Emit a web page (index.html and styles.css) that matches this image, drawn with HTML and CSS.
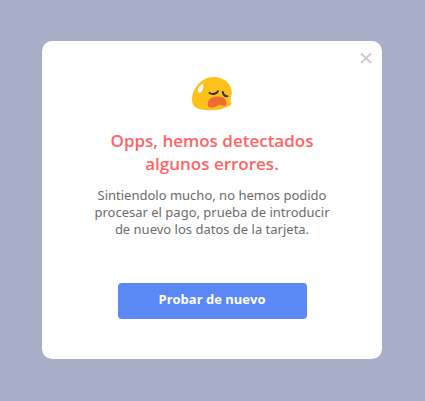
FILE: index.html
```
<!DOCTYPE html>
<html lang="es">
<head>
<meta charset="utf-8">
<meta name="viewport" content="width=device-width, initial-scale=1">
<title>Error de pago</title>
<link rel="stylesheet" href="styles.css">
</head>
<body>
<main class="dialog" role="dialog" aria-labelledby="title">
  <button class="close" type="button" aria-label="Cerrar">
    <svg viewBox="0 0 12 12" width="12" height="12"><path d="M1 1.500l10 9.500M11 1.500L1 11"/></svg>
  </button>
  <svg class="emoji" viewBox="0 0 40 34" width="40" height="34" aria-hidden="true">
    <path fill="#fcc21b" d="M21.500 0C31.500 0 39.500 6 39.800 15.500C39.900 18.500 38.400 20.500 38.500 22.500C38.600 24.500 40 25.500 39.200 27.500C38.500 29.300 36.500 29 35 29.700C31.500 32 26 33.300 19 33.300C8 33.300 0 31 0 23.500C0 12 9 0 21.500 0z"/>
    <path fill="#fff" d="M10.600 7.200c1.900 1 .2 8.100-2.800 8.600c-3 .3-2.300-3.600-.8-5.700c1-1.500 2.400-3.300 3.600-2.900z"/>
    <path fill="#ed6c30" d="M15.700 28C15.500 23 19.500 19.800 25 19.600C31 19.500 35 22 34.500 26.500C34.100 29.800 31.500 29.200 29.500 28C26 26.500 24.500 30.300 20.500 30.700C17.500 31 15.800 30.200 15.700 28z"/>
    <path fill="none" stroke="#2f2f2f" stroke-width="2" stroke-linecap="round" d="M17.500 16C21 18 25 16.600 26 14.200M30.800 15C31.300 17.800 33.300 19.300 35.300 19.200"/>
  </svg>
  <h1 class="title" id="title">Opps, hemos detectados algunos errores.</h1>
  <p class="text">Sintiendolo mucho, no hemos podido procesar el pago, prueba de introducir de nuevo los datos de la tarjeta.</p>
  <button class="retry" type="button">Probar de nuevo</button>
</main>
</body>
</html>
```
FILE: styles.css
```
* { box-sizing: border-box; }
body {
  margin: 0;
  min-height: 100vh;
  padding: 0 1px 1px 0;
  display: flex;
  align-items: center;
  justify-content: center;
  background: #a8aec8;
  font-family: "Noto Sans", "Open Sans", sans-serif;
}
.dialog {
  position: relative;
  width: 80%;
  max-width: 400px;
  padding: 36px 40px 40px;
  display: flex;
  flex-direction: column;
  align-items: center;
  text-align: center;
  background: #fff;
  border-radius: 10px;
}
.close {
  position: absolute;
  top: 11px;
  right: 10px;
  padding: 0;
  border: 0;
  background: none;
  display: flex;
}
.close path { fill: none; stroke: #ccc; stroke-width: 2; }
.title {
  max-width: 240px;
  margin: 18px 0 0;
  font-family: "Open Sans", sans-serif;
  font-size: 17px;
  font-weight: 600;
  line-height: 23px;
  color: #ff6464;
}
.text {
  max-width: 250px;
  margin: 12px 0 0;
  font-size: 13px;
  line-height: 17px;
  color: #6c6c6c;
}
.retry {
  width: 189px;
  height: 36px;
  margin-top: 45px;
  padding: 0 0 4px;
  border: 0;
  border-radius: 4px;
  background: #5a89f5;
  color: #fff;
  font: 700 13px/18px "Open Sans", sans-serif;
}
```
